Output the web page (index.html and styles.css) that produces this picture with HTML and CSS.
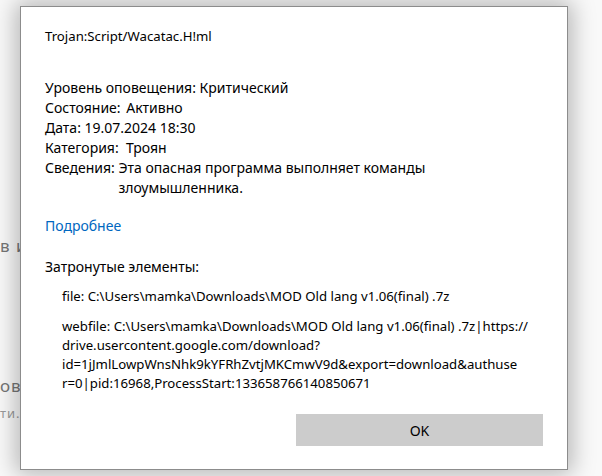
FILE: index.html
```html
<!DOCTYPE html>
<html lang="ru">
<head>
<meta charset="utf-8">
<link rel="stylesheet" href="styles.css">
</head>
<body>
<div class="backdrop">
  <div class="bg-line bg-1">в и</div>
  <div class="bg-line bg-2">ов</div>
  <div class="bg-line bg-3">ти.</div>
</div>
<div class="dialog">
  <div class="title lat">Trojan:Script/Wacatac.H!ml</div>
  <div class="props">
    <div>Уровень оповещения: Критический</div>
    <div>Состояние: <span class="gap">Активно</span></div>
    <div>Дата: 19.07.2024 18:30</div>
    <div>Категория:&nbsp; Троян</div>
    <div class="row"><span class="lbl">Сведения:&nbsp;</span><span class="val">Эта опасная программа выполняет команды злоумышленника.</span></div>
  </div>
  <a class="more" href="#">Подробнее</a>
  <div class="affected">Затронутые элементы:</div>
  <div class="items lat">
    <div class="item">file: C:\Users\mamka\Downloads\MOD Old lang v1.06(final) .7z</div>
    <div class="item">webfile: C:\Users\mamka\Downloads\MOD Old lang v1.06(final) .7z|https://<br>drive.usercontent.google.com/download?<br>id=1jJmlLowpWnsNhk9kYFRhZvtjMKCmwV9d&amp;export=download&amp;authuse<br>r=0|pid:16968,ProcessStart:133658766140850671</div>
  </div>
  <div class="actions"><button class="ok">OK</button></div>
</div>
</body>
</html>
```
FILE: styles.css
```css
html, body {
  margin: 0;
  padding: 0;
  background: #ffffff;
  width: 602px;
  height: 476px;
  overflow: hidden;
  font-family: "Noto Sans", "Open Sans", sans-serif;
}
.backdrop {
  position: relative;
  height: 476px;
  background: #f9f9f9;
}
.bg-line {
  position: absolute;
  left: 0;
  color: #757575;
  font-size: 17px;
  letter-spacing: 1px;
  white-space: nowrap;
}
.bg-1 { top: 234px; }
.bg-2 { top: 374px; }
.bg-3 { top: 404px; font-size: 13px; color: #9a9a9a; }
.dialog {
  position: absolute;
  left: 20px;
  top: 6px;
  box-sizing: border-box;
  width: 548px;
  height: 464px;
  background: #ffffff;
  border: 1px solid #8c8c8c;
  box-shadow: 0 0 22px 4px rgba(0, 0, 0, 0.28);
  padding: 0 24px;
  font-size: 14px;
  color: #000;
  display: flex;
  flex-direction: column;
}
.lat {
  font-size: 13.2px;
}
.title {
  margin-top: 19px;
  line-height: 20px;
}
.props {
  margin-top: 32px;
  line-height: 20px;
}
.gap { margin-left: 2px; }
.row {
  display: flex;
}
.lbl { white-space: nowrap; }
.val { width: 320px; }
.more {
  margin-top: 18px;
  line-height: 20px;
  color: #0067c0;
  text-decoration: none;
  align-self: flex-start;
}
.affected {
  margin-top: 21px;
  line-height: 20px;
}
.items {
  padding-left: 17px;
  margin-top: 10px;
  line-height: 19px;
  white-space: nowrap;
}
.item + .item {
  margin-top: 11px;
}
.actions {
  margin-top: auto;
  margin-bottom: 23px;
  display: flex;
  justify-content: flex-end;
}
.ok {
  width: 247px;
  height: 32px;
  background: #cccccc;
  border: none;
  font-family: inherit;
  font-size: 14px;
  color: #000;
}
```
